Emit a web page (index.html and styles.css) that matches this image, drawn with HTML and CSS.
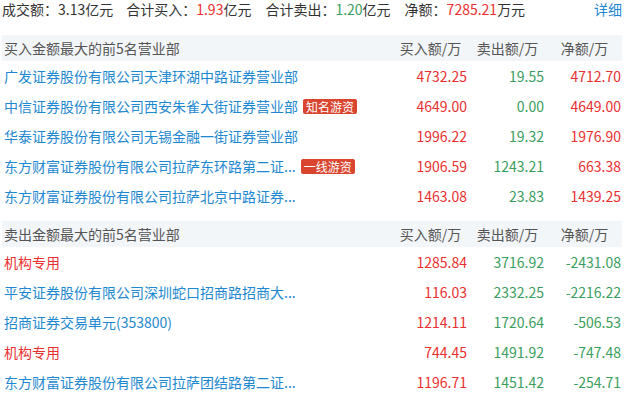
FILE: index.html
```html
<!DOCTYPE html>
<html lang="zh-CN">
<head>
<meta charset="utf-8">
<link rel="stylesheet" href="styles.css">
</head>
<body>
<div class="wrap">
  <div class="summary">
    <div class="stats">
      <span class="stat">成交额：3.13亿元</span>
      <span class="stat">合计买入：<span class="red">1.93</span>亿元</span>
      <span class="stat">合计卖出：<span class="green">1.20</span>亿元</span>
      <span class="stat">净额：<span class="red">7285.21</span>万元</span>
    </div>
    <a class="detail">详细</a>
  </div>

  <div class="table first">
    <div class="row head">
      <div class="name">买入金额最大的前5名营业部</div>
      <div class="col">买入额/万</div>
      <div class="col">卖出额/万</div>
      <div class="col">净额/万</div>
    </div>
    <div class="row">
      <div class="name blue">广发证券股份有限公司天津环湖中路证券营业部</div>
      <div class="num red">4732.25</div><div class="num green">19.55</div><div class="num red">4712.70</div>
    </div>
    <div class="row">
      <div class="name blue">中信证券股份有限公司西安朱雀大街证券营业部<span class="tag">知名游资</span></div>
      <div class="num red">4649.00</div><div class="num green">0.00</div><div class="num red">4649.00</div>
    </div>
    <div class="row">
      <div class="name blue">华泰证券股份有限公司无锡金融一街证券营业部</div>
      <div class="num red">1996.22</div><div class="num green">19.32</div><div class="num red">1976.90</div>
    </div>
    <div class="row">
      <div class="name blue">东方财富证券股份有限公司拉萨东环路第二证...<span class="tag">一线游资</span></div>
      <div class="num red">1906.59</div><div class="num green">1243.21</div><div class="num red">663.38</div>
    </div>
    <div class="row">
      <div class="name blue">东方财富证券股份有限公司拉萨北京中路证券...</div>
      <div class="num red">1463.08</div><div class="num green">23.83</div><div class="num red">1439.25</div>
    </div>
  </div>

  <div class="table second">
    <div class="row head">
      <div class="name">卖出金额最大的前5名营业部</div>
      <div class="col">买入额/万</div>
      <div class="col">卖出额/万</div>
      <div class="col">净额/万</div>
    </div>
    <div class="row">
      <div class="name red">机构专用</div>
      <div class="num red">1285.84</div><div class="num green">3716.92</div><div class="num green">-2431.08</div>
    </div>
    <div class="row">
      <div class="name blue">平安证券股份有限公司深圳蛇口招商路招商大...</div>
      <div class="num red">116.03</div><div class="num green">2332.25</div><div class="num green">-2216.22</div>
    </div>
    <div class="row">
      <div class="name blue">招商证券交易单元(353800)</div>
      <div class="num red">1214.11</div><div class="num green">1720.64</div><div class="num green">-506.53</div>
    </div>
    <div class="row">
      <div class="name red">机构专用</div>
      <div class="num red">744.45</div><div class="num green">1491.92</div><div class="num green">-747.48</div>
    </div>
    <div class="row">
      <div class="name blue">东方财富证券股份有限公司拉萨团结路第二证...</div>
      <div class="num red">1196.71</div><div class="num green">1451.42</div><div class="num green">-254.71</div>
    </div>
  </div>
</div>
</body>
</html>
```

FILE: styles.css
```css
* { box-sizing: border-box; }
html, body { margin: 0; padding: 0; background: #fff; }
body {
  font-family: "Noto Sans CJK SC", "Microsoft YaHei", sans-serif;
  font-size: 14px;
  color: #333;
}
.wrap { padding: 0 7px 0 2px; width: 629px; }
.summary {
  display: flex;
  justify-content: space-between;
  align-items: center;
  height: 18px;
  line-height: 18px;
}
.stats { display: flex; }
.stat { margin-right: 14px; }
.stat:first-child { margin-right: 13px; }
.detail { color: #1e88d0; cursor: pointer; }
.table.first { margin-top: 17px; }
.table.second { margin-top: 10px; }
.row {
  display: grid;
  grid-template-columns: 1fr 77px 77px 77px;
  padding-right: 1px;
  height: 30px;
  align-items: center;
  white-space: nowrap;
}
.row.head {
  height: 26px;
  background: #f3f6f9;
  color: #555;
}
.name { padding-left: 2px; display: flex; align-items: center; }
.col { text-align: center; padding-left: 4px; }
.num { text-align: right; }
.blue { color: #1e88d0; }
.red { color: #e93030; }
.green { color: #3a9e5e; }
.tag {
  display: inline-block;
  margin-left: 5px;
  padding: 0 3px;
  height: 15px;
  line-height: 15px;
  font-size: 12px;
  color: #fff;
  background: #d9452f;
  border-radius: 2px;
}
```
